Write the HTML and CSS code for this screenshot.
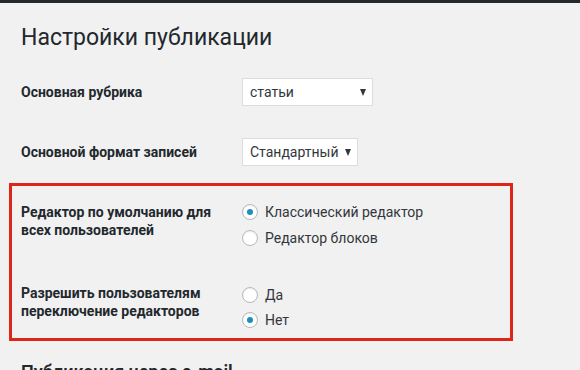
FILE: index.html
```html
<!DOCTYPE html>
<html lang="ru">
<head>
  <meta charset="UTF-8">
  <meta name="viewport" content="width=device-width, initial-scale=1.0">
  <title>Настройки публикации</title>
  <link rel="stylesheet" href="styles.css">
</head>
<body>
  <div class="admin-bar"></div>

  <div class="wrap">
    <h1 class="page-title">Настройки публикации</h1>

    <div class="form-row row-category">
      <div class="row-label">Основная рубрика</div>
      <div class="row-field">
        <div class="fake-select select-category">
          <span>статьи</span>
          <span class="arrow"></span>
        </div>
      </div>
    </div>

    <div class="form-row row-format">
      <div class="row-label">Основной формат записей</div>
      <div class="row-field">
        <div class="fake-select select-format">
          <span>Стандартный</span>
          <span class="arrow"></span>
        </div>
      </div>
    </div>

    <div class="highlight-box">
      <div class="form-row radio-row">
        <div class="row-label">Редактор по умолчанию для<br>всех пользователей</div>
        <div class="row-field">
          <label class="radio"><span class="radio-dot checked"></span>Классический редактор</label>
          <label class="radio"><span class="radio-dot"></span>Редактор блоков</label>
        </div>
      </div>

      <div class="form-row radio-row row-switch">
        <div class="row-label">Разрешить пользователям<br>переключение редакторов</div>
        <div class="row-field">
          <label class="radio"><span class="radio-dot"></span>Да</label>
          <label class="radio"><span class="radio-dot checked"></span>Нет</label>
        </div>
      </div>
    </div>

    <h2 class="section-title">Публикация через e-mail</h2>
  </div>
</body>
</html>
```

FILE: styles.css
```css
body {
  margin: 0;
  padding: 0;
  background: #f1f1f1;
  font-family: Roboto, "Noto Sans", sans-serif;
  color: #23282d;
  overflow: hidden;
}

.admin-bar {
  height: 3px;
  background: #23282d;
}

.wrap {
  padding-left: 21px;
}

.page-title {
  font-size: 23px;
  font-weight: 400;
  line-height: 30px;
  margin: 20px 0 0 0;
  color: #23282d;
}

.form-row {
  display: flex;
  align-items: center;
}

.row-label {
  width: 221px;
  font-size: 14px;
  font-weight: 700;
  line-height: 18px;
  color: #23282d;
}

.row-category {
  margin-top: 25px;
}

.row-format {
  margin-top: 32px;
}

.fake-select {
  display: flex;
  align-items: center;
  justify-content: space-between;
  box-sizing: border-box;
  height: 28px;
  padding: 0 6px 0 7px;
  background: #fff;
  border: 1px solid #ddd;
  font-size: 14px;
  color: #32373c;
}

.select-category {
  width: 131px;
}

.select-format {
  width: 116px;
}

.arrow {
  width: 0;
  height: 0;
  border-left: 3.5px solid transparent;
  border-right: 3.5px solid transparent;
  border-top: 7px solid #32373c;
}

.highlight-box {
  box-sizing: border-box;
  width: 504px;
  margin: 17px 0 0 -12px;
  padding: 13px 0 6px 9px;
  border: 3px solid #dd2617;
}

.radio-row {
  align-items: flex-start;
}

.radio-row .row-label {
  padding-top: 4px;
}

.row-switch {
  margin-top: 31px;
}

.row-switch .row-label {
  padding-top: 2px;
}

.row-field .radio {
  display: flex;
  align-items: center;
  height: 26px;
  font-size: 14px;
  color: #32373c;
}

.row-switch .radio {
  height: 25px;
}

.radio-dot {
  position: relative;
  box-sizing: border-box;
  width: 16px;
  height: 16px;
  margin-right: 7px;
  border: 1px solid #b4b9be;
  border-radius: 50%;
  background: #fff;
  box-shadow: inset 0 1px 2px rgba(0, 0, 0, 0.07);
}

.radio-dot.checked::before {
  content: "";
  position: absolute;
  left: 4px;
  top: 4px;
  width: 6px;
  height: 6px;
  border-radius: 50%;
  background: #1e8cbe;
}

.section-title {
  font-size: 18px;
  font-weight: 600;
  line-height: 24px;
  margin: 19px 0 0 0;
  color: #23282d;
}
```
